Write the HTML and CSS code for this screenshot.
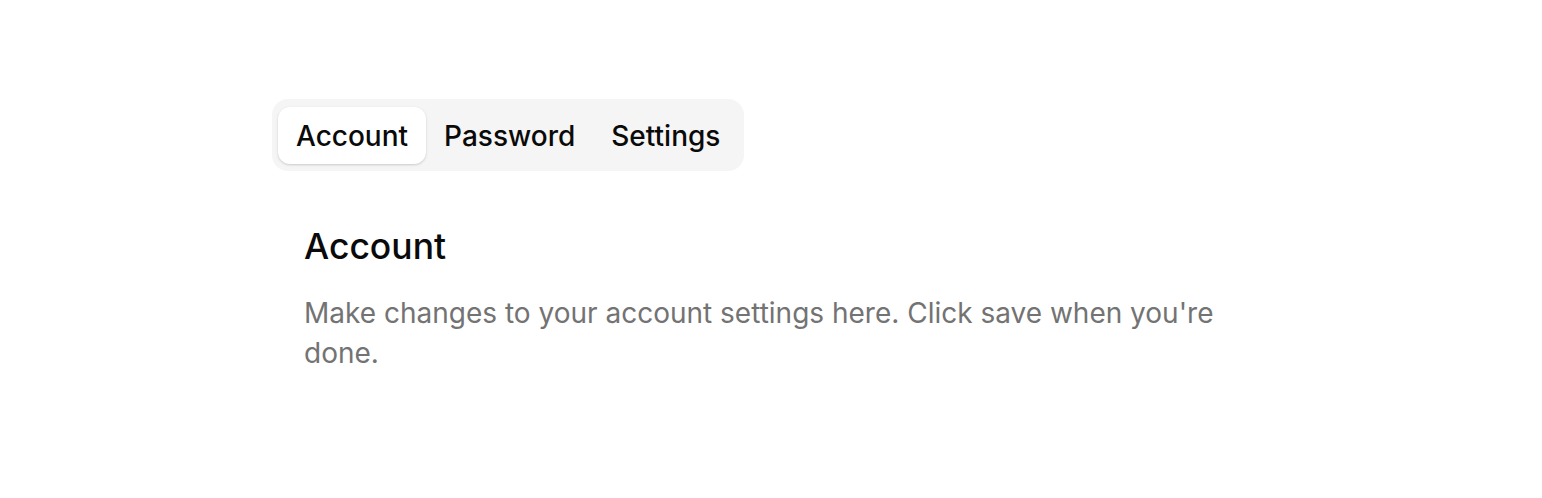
FILE: index.html
```html
<!DOCTYPE html>
<html>
<head>
<meta charset="utf-8">
<link rel="stylesheet" href="styles.css">
</head>
<body>
<div class="page">
  <div class="tabs">
    <div class="tablist">
      <button class="tab active">Account</button>
      <button class="tab">Password</button>
      <button class="tab">Settings</button>
    </div>
    <div class="panel">
      <h2 class="title">Account</h2>
      <p class="desc">Make changes to your account settings here. Click save when you're done.</p>
    </div>
  </div>
</div>
</body>
</html>
```
FILE: styles.css
```css
html, body {
  margin: 0;
  padding: 0;
  background: #ffffff;
}
body {
  font-family: Inter, "Noto Sans", sans-serif;
  color: #0a0a0a;
}
.page {
  padding: 99px 0 0 272px;
}
.tabs {
  display: flex;
  flex-direction: column;
  align-items: flex-start;
}
.tablist {
  display: flex;
  align-items: center;
  background: #f5f5f5;
  border-radius: 16px;
  padding: 7px 6px;
  height: 58px;
  box-sizing: content-box;
}
.tab {
  font-family: inherit;
  font-size: 28px;
  font-weight: 500;
  color: #0a0a0a;
  background: transparent;
  border: none;
  border-radius: 12px;
  height: 57px;
  padding: 2px 18px 0;
  cursor: pointer;
}
.tab.active {
  background: #ffffff;
  box-shadow: 0 1px 3px rgba(0,0,0,0.12), 0 1px 2px rgba(0,0,0,0.06);
}
.panel {
  padding: 56px 0 0 32px;
  width: 940px;
}
.title {
  margin: 0;
  font-size: 35.5px;
  font-weight: 500;
  line-height: 40px;
}
.desc {
  margin: 26px 0 0 0;
  font-size: 28px;
  line-height: 40px;
  color: #737373;
}
```
